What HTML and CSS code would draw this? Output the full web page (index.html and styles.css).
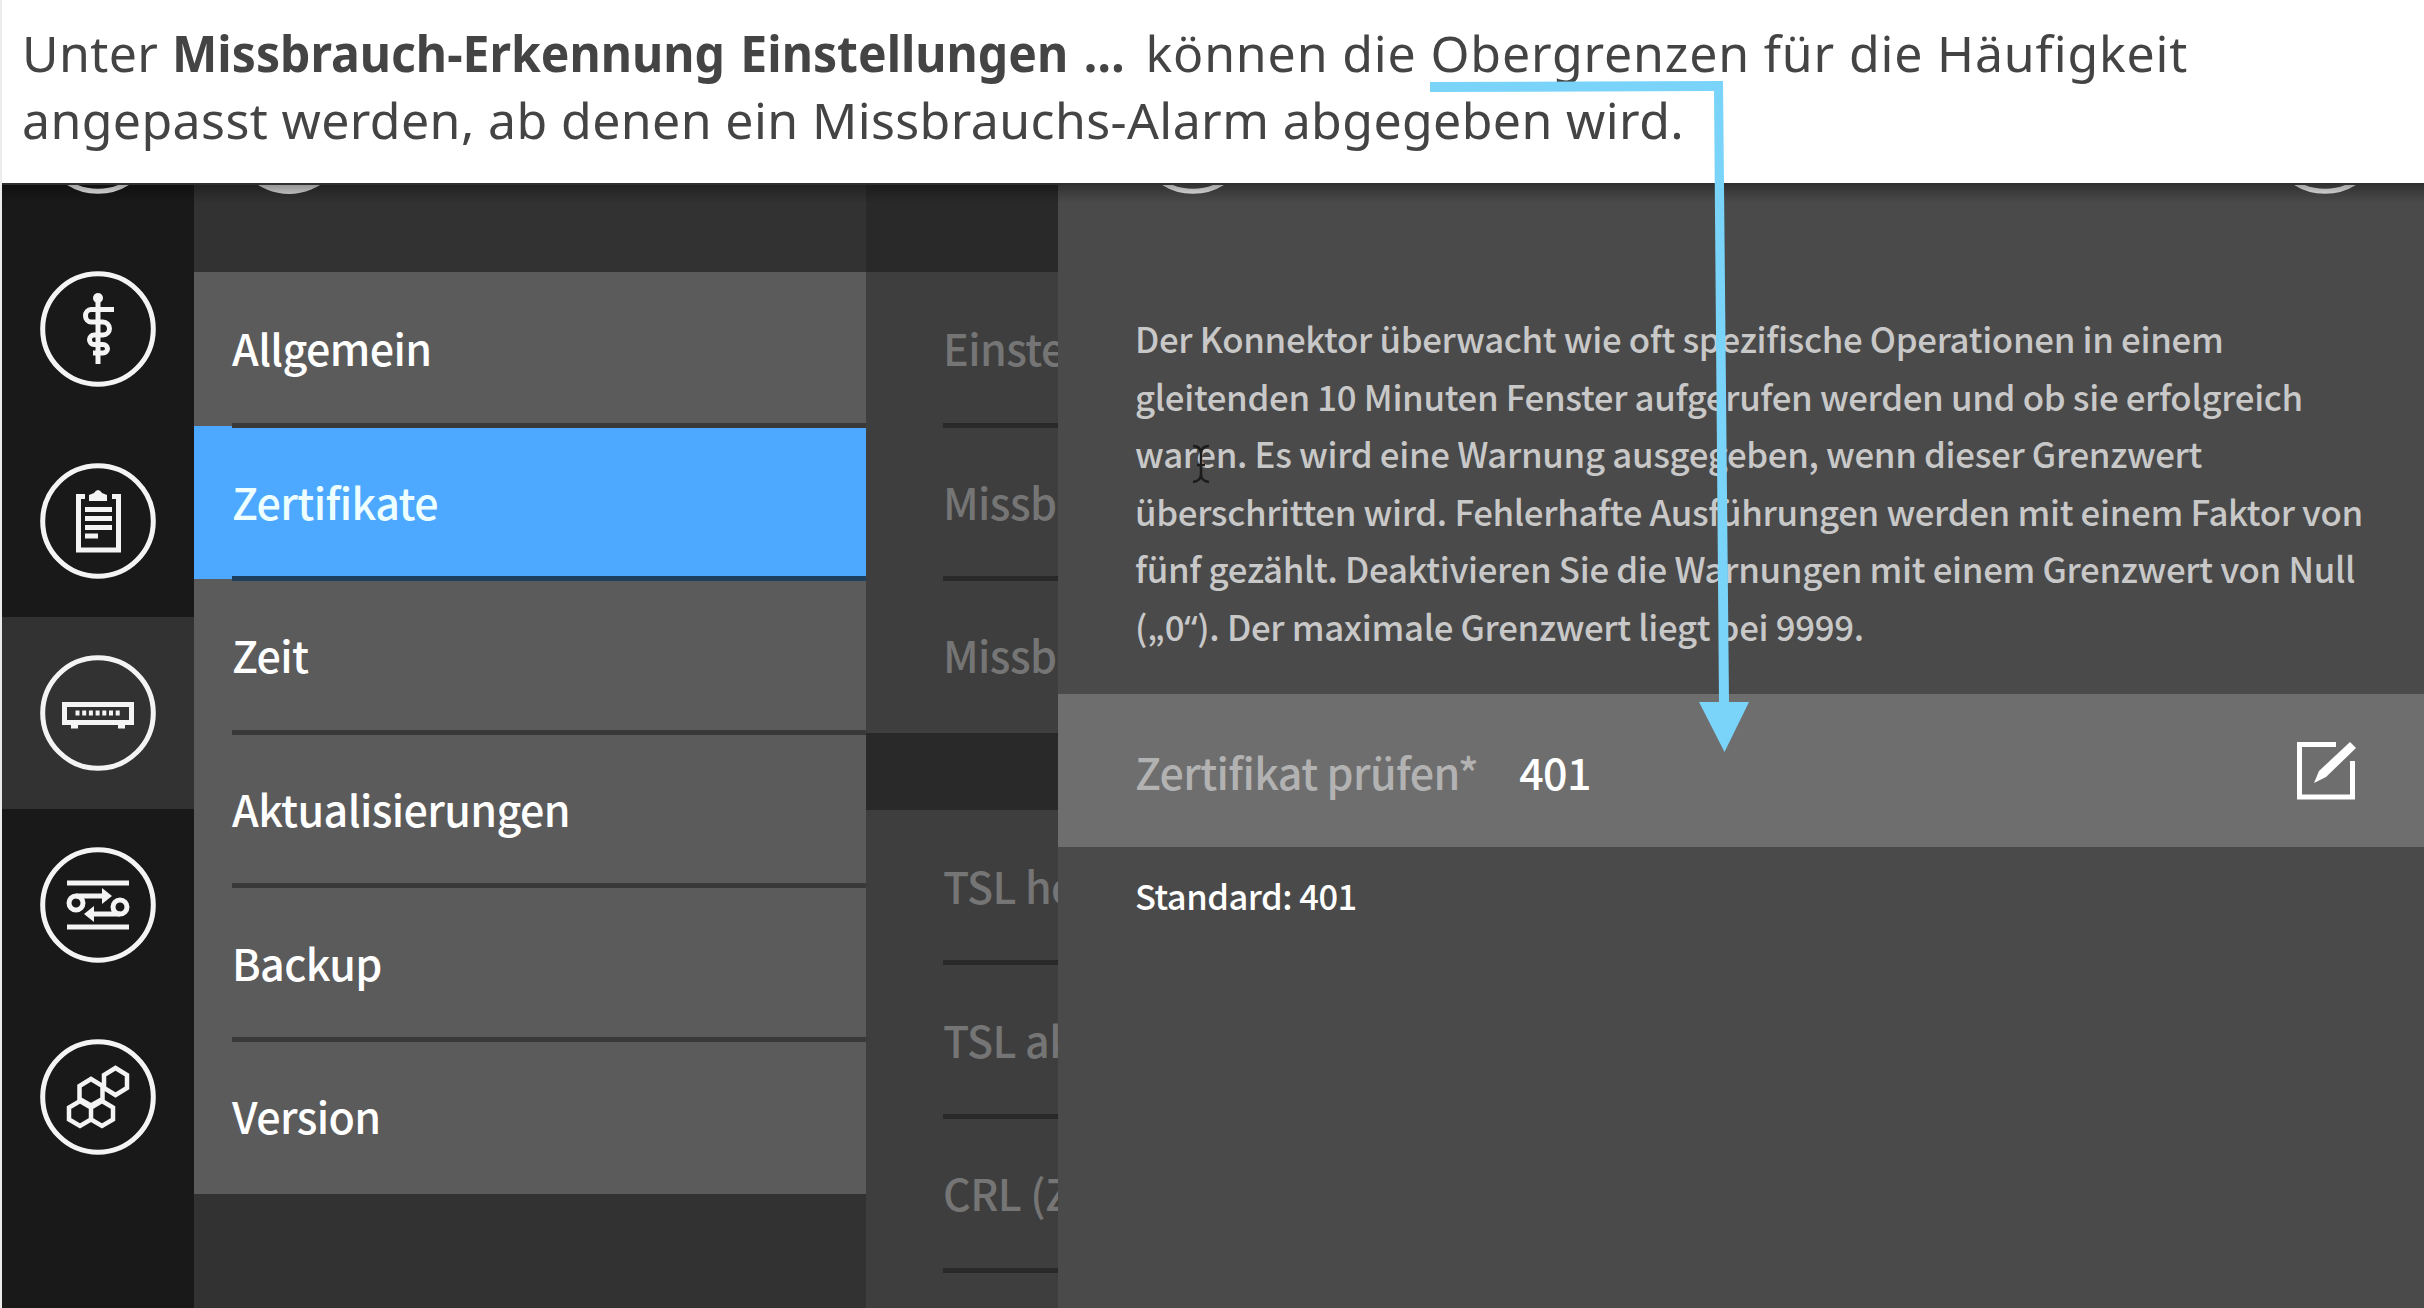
FILE: index.html
```html
<!DOCTYPE html>
<html lang="de">
<head>
<meta charset="utf-8">
<title>Missbrauch-Erkennung Einstellungen</title>
<link rel="stylesheet" href="styles.css">
</head>
<body>
<header class="intro">
  <p class="line line-a">Unter <b>Missbrauch-Erkennung Einstellungen …</b> <span class="tail">können die Obergrenzen für die Häufigkeit</span></p>
  <p class="line line-b">angepasst werden, ab denen ein Missbrauchs-Alarm abgegeben wird.</p>
</header>
<main class="app">
  <nav class="rail">
    <div class="rail-item cut"><svg class="icon" viewBox="-58 -58 116 116"><circle r="55.3"/></svg></div>
    <div class="rail-item"><svg class="icon" viewBox="-58 -58 116 116"><circle r="55.3"/><circle class="solid" cy="-31" r="5"/><path d="M0-32V35M16-19.500H-7a5.500 6.250 0 0 0 0 12.500H5a6.500 6.500 0 0 1 0 13H-4a4.500 4.750 0 0 0 0 9.500H5a4.500 4.250 0 0 1 0 8.500H-5"/></svg></div>
    <div class="rail-item"><svg class="icon" viewBox="-58 -58 116 116"><circle r="55.3"/><path d="M-13-24.500H-19.500V29H20.500V-24.500H14M-13-11.500H14M-13-2.500H14M-13 6.500H14M-13 15H0"/><path class="solid" d="M-9-20v-6l5-2q4-6 8 0l5 2v6z"/></svg></div>
    <div class="rail-item active"><svg class="icon" viewBox="-58 -58 116 116"><circle r="55.3"/><path d="M-33.500-8.500H33.500V9.500H-33.500zM-27 13h7M20 13h7"/><path class="dots" d="M-22.500 0H24"/></svg></div>
    <div class="rail-item"><svg class="icon" viewBox="-58 -58 116 116"><circle r="55.3"/><path d="M-31-22H31M-31 22H31M-22-9H5M22 9H-5"/><circle cx="-22" cy="-2" r="7"/><circle cx="22" cy="2" r="7"/><path class="solid" d="M4-17l10 8-10 8zM-4 17l-10-8 10-8z"/></svg></div>
    <div class="rail-item"><svg class="icon" viewBox="-58 -58 116 116"><circle r="55.3"/><path class="thin" d="M17.500-29l11.500 7v13l-11.500 7-11.500-7v-13zM-7-18l11.500 7v13l-11.500 6.500-11.500-6.500v-13zM-18 4l11 6.500v12l-11 6.500-11-6.500v-12zM4 4l11 6.500v12l-11 6.500-11-6.500v-12z"/></svg></div>
  </nav>
  <section class="menu">
    <div class="disc"></div>
    <ul class="menu-list">
      <li><span>Allgemein</span></li>
      <li class="selected"><span>Zertifikate</span></li>
      <li><span>Zeit</span></li>
      <li><span>Aktualisierungen</span></li>
      <li><span>Backup</span></li>
      <li><span>Version</span></li>
    </ul>
  </section>
  <section class="sub">
    <ul class="sub-list">
      <li><span>Einste</span></li>
      <li><span>Missb</span></li>
      <li><span>Missb</span></li>
    </ul>
    <ul class="sub-list">
      <li><span>TSL he</span></li>
      <li><span>TSL ak</span></li>
      <li><span>CRL (Z</span></li>
      <li><span></span></li>
    </ul>
  </section>
  <section class="detail">
    <div class="detail-head"><svg class="icon" viewBox="-58 -58 116 116"><circle r="55.3"/></svg><svg class="icon" viewBox="-58 -58 116 116"><circle r="55.3"/></svg></div>
    <p class="copy">Der Konnektor überwacht wie oft spezifische Operationen in einem<br>gleitenden 10 Minuten Fenster aufgerufen werden und ob sie erfolgreich<br>waren. Es wird eine Warnung ausgegeben, wenn dieser Grenzwert<br>überschritten wird. Fehlerhafte Ausführungen werden mit einem Faktor von<br>fünf gezählt. Deaktivieren Sie die Warnungen mit einem Grenzwert von Null<br>(„0<span class="quote">“</span>). Der maximale Grenzwert liegt bei 9999.</p>
    <div class="field"><span class="label">Zertifikat prüfen*</span><span class="value">401</span>
      <svg class="edit" viewBox="0 0 60 60"><path d="M39 3.500H2.500V56H55.500V20"/><path class="pen" d="M17 42l5-12L53 1l6 6-30 29z"/></svg>
    </div>
    <p class="hint">Standard: 401</p>
  </section>
</main>
<svg class="overlay" viewBox="0 0 2424 1308">
  <path class="caret" d="M1193 446q8 0 8 8v20q0 7-8 8M1209 446q-8 0-8 8v20q0 7 8 8M1197 465h8"/>
  <path class="arrow" d="M1430 82L1723 81 1729 702H1749L1724.500 752 1699 702H1719L1714 91 1430 92z"/>
</svg>
</body>
</html>
```
FILE: styles.css
```css
* { box-sizing: border-box; }
body { margin: 0; width: 2424px; height: 1308px; overflow: hidden; background: #fff; display: flex; flex-direction: column; border-left: 2px solid #ececec; position: relative; font-family: "Noto Sans CJK SC", sans-serif; font-weight: 500; }
p, ul { margin: 0; padding: 0; list-style: none; }
.intro { height: 183px; flex: none; padding: 20px 0 0 20px; font: 400 50px/67px "Noto Sans", sans-serif; color: #444; white-space: nowrap; }
.line { letter-spacing: .39px; }
.line b { display: inline-block; letter-spacing: 0; word-spacing: 3px; transform: scaleX(.962); transform-origin: 0 0; margin-right: -30px; }
.tail { letter-spacing: .84px; }
.app { flex: 1; min-height: 0; display: flex; position: relative; overflow: hidden; border-top: 2px solid #2e322f; }
.app::after { content: ""; position: absolute; inset: 0 0 auto; height: 18px; background: linear-gradient(rgba(0,0,0,.32), transparent); }
.icon { width: 116px; height: 116px; flex: none; display: block; fill: none; stroke: #f4f4f4; stroke-width: 5; overflow: visible; }
.solid { fill: #f4f4f4; stroke: none; }
.thin { stroke-width: 4.500; }
.dots { stroke-dasharray: 4 2.700; }
.rail { width: 192px; flex: none; background: #191919; }
.rail-item { height: 192px; display: grid; place-items: center; }
.rail-item.cut { height: 48px; display: flex; align-items: flex-start; justify-content: center; }
.cut .icon { margin-top: -107px; }
.active { background: #323232; }
.menu { width: 672px; flex: none; background: #323232; }
.disc { width: 116px; height: 116px; border-radius: 50%; background: #ddd; margin: -107px 0 78px 37px; }
.menu-list li { height: 153.600px; background: #5b5b5b; padding-left: 38px; }
.menu-list span, .sub-list span { position: relative; display: flex; height: calc(100% + 2px); align-items: center; color: #fff; font-size: 43px; letter-spacing: -.6px; line-height: 60px; border-bottom: 5px solid #393939; }
.menu-list li:last-child span { border-color: transparent; }
.menu-list .selected { background: #4da8ff; }
.menu-list .selected span { border-color: #1f3f5e; color: #edffff; }
.sub { width: 192px; flex: none; background: #292929; overflow: hidden; padding-top: 87px; white-space: nowrap; }
.sub-list { margin-bottom: 77px; background: #3e3e3e; }
.sub-list li { height: 153.600px; padding-left: 77px; }
.sub-list span { color: #757575; border-color: #292929; }
.sub-list li:last-child span { border-color: transparent; }
.detail { flex: 1; min-width: 0; background: #4a4a4a; white-space: nowrap; }
.detail-head { display: flex; justify-content: space-between; margin-top: -107px; padding: 0 41px 0 77px; }
.copy { padding: 116px 0 0 77px; height: 500px; font-size: 34.800px; letter-spacing: -.33px; line-height: 57.600px; color: #c8c8c8; }
.quote { font-family: "Noto Sans", sans-serif; }
.field { height: 153px; background: #6e6e6e; padding: 0 67px 0 77px; display: flex; align-items: center; font-size: 43px; letter-spacing: -.65px; }
.label { color: #b2b2b2; }
.value { color: #fff; margin-left: 41px; }
.edit { width: 60px; height: 60px; margin-left: auto; fill: none; stroke: #fff; stroke-width: 5; }
.pen { fill: #fff; stroke: none; }
.hint { padding: 21px 0 0 77px; font-size: 34.500px; letter-spacing: -.5px; line-height: 54px; color: #fff; }
.overlay { position: absolute; left: -2px; top: 0; width: 2424px; height: 1308px; }
.arrow { fill: #7ad4fa; }
.caret { fill: none; stroke: #1c1c1c; stroke-width: 2.500; }
```
